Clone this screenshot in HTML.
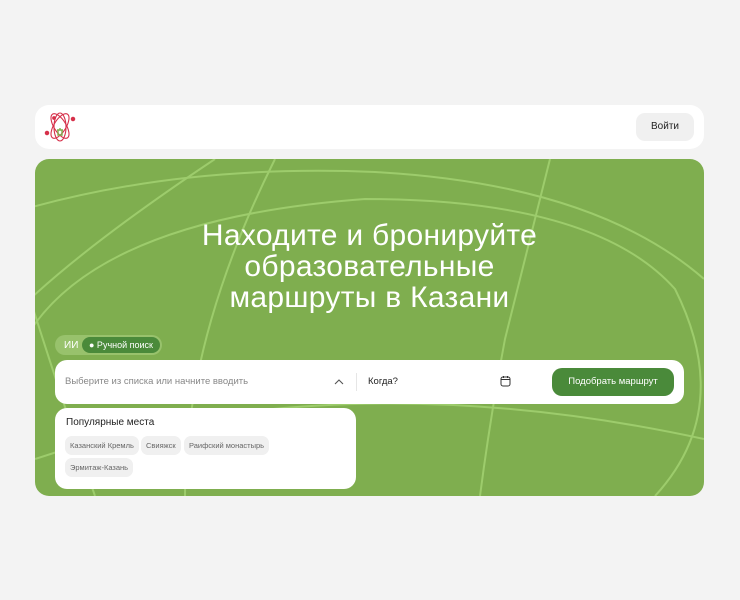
<!DOCTYPE html><html><head><meta charset="utf-8"><style>
html,body{margin:0;width:740px;height:600px;overflow:hidden}
body{background:#f3f3f3;font-family:"Liberation Sans",sans-serif;position:relative}
.hdr{position:absolute;left:35px;top:105px;width:669px;height:44px;background:#fff;border-radius:14px}
.login{position:absolute;right:10px;top:8px;width:58px;height:28px;background:#f0f0f0;border-radius:9px;font-size:10px;color:#222;text-align:center;line-height:28px}
.hero{position:absolute;left:35px;top:159px;width:669px;height:337px;background:#7fae4f;border-radius:14px;overflow:hidden}
h1{position:absolute;left:0;right:0;top:61px;margin:0;text-align:center;color:#fff;font-weight:normal;font-size:30px;line-height:31px;letter-spacing:0.3px}
.tog{position:absolute;left:20px;top:176px;width:107px;height:20px;background:#98c26c;border-radius:10px}
.tog .ii{position:absolute;left:9px;top:5px;font-size:10px;color:#fff}
.tog .on{position:absolute;left:27px;top:2px;width:78px;height:16px;background:#4a8a3a;border-radius:8px;color:#fff;font-size:9px;line-height:16px;text-align:center}
.bar{position:absolute;left:20px;top:201px;width:629px;height:44px;background:#fff;border-radius:12px}
.ph{position:absolute;left:10px;top:16px;font-size:9.5px;color:#888}
.when{position:absolute;left:313px;top:16px;font-size:9.5px;color:#222}
.sep{position:absolute;left:301px;top:13px;width:1px;height:18px;background:#e6e6e6}
.btn{position:absolute;right:10px;top:8px;width:122px;height:28px;background:#4a8a3a;border-radius:10px;color:#fff;font-size:9.5px;text-align:center;line-height:28px}
.dd{position:absolute;left:20px;top:249px;width:301px;height:81px;background:#fff;border-radius:12px}
.dd .t{position:absolute;left:11px;top:9px;font-size:10px;color:#222}
.chip{position:absolute;height:19px;line-height:19px;background:#f0f0f0;border-radius:7px;font-size:7.5px;color:#666;padding:0 5px}
</style></head><body>
<div class="hdr">
<svg style="position:absolute;left:8px;top:6px" width="34" height="32" viewBox="0 0 34 32" fill="none" stroke="#d6304a" stroke-width="1.1">
<ellipse cx="17" cy="15" rx="6" ry="14" transform="rotate(-32 17 15)"/>
<ellipse cx="17" cy="15" rx="6" ry="14" transform="rotate(32 17 15)"/>
<ellipse cx="17" cy="16" rx="6" ry="14"/>
<circle cx="30" cy="8" r="1.7" fill="#d6304a"/><circle cx="4" cy="22" r="1.7" fill="#d6304a"/><circle cx="11" cy="7" r="1.3" fill="#d6304a"/>
<path d="M14 19H20M15 19V24H19V19M17 17V19" stroke="#7fae4f" stroke-width="1.4"/>
</svg>
<div class="login">Войти</div></div>
<div class="hero">
<svg style="position:absolute;left:0;top:0" width="669" height="337" fill="none" stroke="#9dcc6c" stroke-width="2">
<path d="M-10 50 Q150 5 340 13 Q560 25 669 120"/>
<path d="M-10 180 Q60 60 330 40 Q560 40 640 130 Q700 250 620 337"/>
<path d="M180 0 Q60 80 -5 140"/>
<path d="M515 0 Q490 100 470 180 Q455 260 445 337"/>
<path d="M-5 140 Q30 250 60 337"/>
<path d="M240 0 Q150 180 150 337"/>
<path d="M0 300 Q300 200 669 280"/>
</svg>
<h1>Находите и бронируйте<br>образовательные<br>маршруты в Казани</h1>
<div class="tog"><span class="ii">ИИ</span><div class="on">● Ручной поиск</div></div>
<div class="bar"><div class="ph">Выберите из списка или начните вводить</div>
<svg style="position:absolute;left:279px;top:18px" width="10" height="8"><path d="M1 6L5 2L9 6" stroke="#555" fill="none" stroke-width="1.1"/></svg>
<div class="sep"></div><div class="when">Когда?</div>
<svg style="position:absolute;left:445px;top:15px" width="11" height="12"><rect x="1" y="2" width="9" height="9" rx="2" stroke="#333" fill="none"/><path d="M1 4.5H10M3.5 1V3M7.5 1V3" stroke="#333"/></svg>
<div class="btn">Подобрать маршрут</div></div>
<div class="dd"><div class="t">Популярные места</div>
<div class="chip" style="left:10px;top:28px">Казанский Кремль</div>
<div class="chip" style="left:86px;top:28px">Свияжск</div>
<div class="chip" style="left:129px;top:28px">Раифский монастырь</div>
<div class="chip" style="left:10px;top:50px">Эрмитаж-Казань</div>
</div></div>
</body></html>
